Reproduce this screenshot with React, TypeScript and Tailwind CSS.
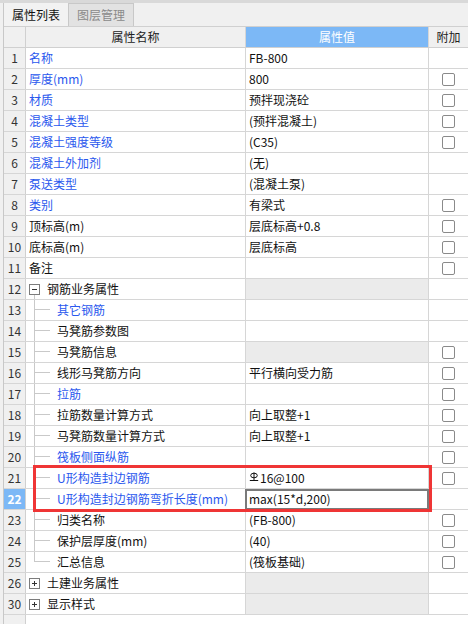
import React from 'react'

type Row = {
  n: number
  name: string
  blue?: boolean
  value?: React.ReactNode
  cb?: boolean
  gray?: boolean
  kind?: 'plain' | 'child' | 'open' | 'closed'
  last?: boolean
  selected?: boolean
  editing?: boolean
}

function Rebar() {
  return (
    <svg width="10" height="10" viewBox="0 0 10 10" className="mr-[1px] -mt-[3px] inline-block" fill="none" stroke="#111" strokeWidth="1">
      <ellipse cx="5" cy="3.5" rx="3.3" ry="2.3" />
      <line x1="5" y1="0.5" x2="5" y2="8.5" />
      <line x1="0.8" y1="8.5" x2="9.2" y2="8.5" />
    </svg>
  )
}

const ROWS: Row[] = [
  { n: 1, name: '名称', blue: true, value: 'FB-800' },
  { n: 2, name: '厚度(mm)', blue: true, value: '800', cb: true },
  { n: 3, name: '材质', blue: true, value: '预拌现浇砼', cb: true },
  { n: 4, name: '混凝土类型', blue: true, value: '(预拌混凝土)', cb: true },
  { n: 5, name: '混凝土强度等级', blue: true, value: '(C35)', cb: true },
  { n: 6, name: '混凝土外加剂', blue: true, value: '(无)' },
  { n: 7, name: '泵送类型', blue: true, value: '(混凝土泵)' },
  { n: 8, name: '类别', blue: true, value: '有梁式', cb: true },
  { n: 9, name: '顶标高(m)', value: '层底标高+0.8', cb: true },
  { n: 10, name: '底标高(m)', value: '层底标高', cb: true },
  { n: 11, name: '备注', cb: true },
  { n: 12, name: '钢筋业务属性', kind: 'open', gray: true },
  { n: 13, name: '其它钢筋', blue: true, kind: 'child' },
  { n: 14, name: '马凳筋参数图', kind: 'child' },
  { n: 15, name: '马凳筋信息', kind: 'child', gray: true, cb: true },
  { n: 16, name: '线形马凳筋方向', kind: 'child', value: '平行横向受力筋', cb: true },
  { n: 17, name: '拉筋', blue: true, kind: 'child', cb: true },
  { n: 18, name: '拉筋数量计算方式', kind: 'child', value: '向上取整+1', cb: true },
  { n: 19, name: '马凳筋数量计算方式', kind: 'child', value: '向上取整+1', cb: true },
  { n: 20, name: '筏板侧面纵筋', blue: true, kind: 'child', cb: true },
  {
    n: 21,
    name: 'U形构造封边钢筋',
    blue: true,
    kind: 'child',
    value: (
      <>
        <Rebar />
        16@100
      </>
    ),
    cb: true,
  },
  { n: 22, name: 'U形构造封边钢筋弯折长度(mm)', blue: true, kind: 'child', value: 'max(15*d,200)', selected: true, editing: true },
  { n: 23, name: '归类名称', kind: 'child', value: '(FB-800)', cb: true },
  { n: 24, name: '保护层厚度(mm)', kind: 'child', value: '(40)', cb: true },
  { n: 25, name: '汇总信息', kind: 'child', value: '(筏板基础)', cb: true, last: true },
  { n: 26, name: '土建业务属性', kind: 'closed', gray: true },
  { n: 30, name: '显示样式', kind: 'closed', gray: true },
]

function ExpandBox({ open }: { open: boolean }) {
  return (
    <div className="relative h-[11px] w-[11px] border border-[#7c7c7c] bg-white">
      <div className="absolute left-[2px] top-[4px] h-px w-[5px] bg-[#333]" />
      {!open && <div className="absolute left-[4px] top-[2px] h-[5px] w-px bg-[#333]" />}
    </div>
  )
}

function NameCell({ row }: { row: Row }) {
  const color = row.blue ? 'text-[#2a58ee]' : 'text-[#111]'
  if (row.kind === 'open' || row.kind === 'closed') {
    const open = row.kind === 'open'
    return (
      <div className="flex h-full items-stretch pl-[3px]">
        <div className="flex w-[11px] flex-col items-center">
          <div className="flex-1" />
          <ExpandBox open={open} />
          <div className={`flex-1 w-px ${open ? 'bg-[#c9c9c9]' : ''}`} />
        </div>
        <span className={`ml-[7px] self-center ${color}`}>{row.name}</span>
      </div>
    )
  }
  if (row.kind === 'child') {
    return (
      <div className="flex h-full items-stretch pl-[8px]">
        <div className="flex w-[16px] flex-col">
          <div className="h-1/2 border-b border-l border-[#c9c9c9]" />
          <div className={`flex-1 ${row.last ? '' : 'border-l border-[#c9c9c9]'}`} />
        </div>
        <span className={`ml-[7px] self-center whitespace-nowrap ${color}`}>{row.name}</span>
      </div>
    )
  }
  return (
    <div className="flex h-full items-center pl-[3px]">
      <span className={color}>{row.name}</span>
    </div>
  )
}

function Checkbox() {
  return <div className="h-[13px] w-[13px] rounded-[2px] border border-[#8a8a8a] bg-white" />
}

function TableRow({ row }: { row: Row }) {
  return (
    <div className="flex h-[21px] border-b border-[#d6d6d6]">
      <div
        className={`flex w-[22px] shrink-0 items-center justify-center border-r border-[#d0d0d0] ${
          row.selected ? 'bg-[#7cb8f6] font-bold text-white' : 'bg-[#f0f0f0] text-[#333]'
        }`}
      >
        {row.n}
      </div>
      <div className="w-[220px] shrink-0 border-r border-[#d6d6d6] bg-white">
        <NameCell row={row} />
      </div>
      <div
        className={`relative flex w-[183px] shrink-0 items-center border-r border-[#d6d6d6] pl-[3px] text-[#111] ${
          row.gray ? 'bg-[#ebebeb]' : 'bg-white'
        }`}
      >
        {row.value}
        {row.editing && <div className="absolute -left-px top-0 -right-px -bottom-px border-2 border-[#7a7a7a]" />}
      </div>
      <div className="flex flex-1 items-center justify-center bg-white">{row.cb && <Checkbox />}</div>
    </div>
  )
}

export default function App() {
  return (
    <div className="relative flex h-[624px] w-[468px] flex-col overflow-hidden bg-[#f0f0f0] font-['Noto_Sans_CJK_SC','Liberation_Sans',sans-serif] text-[12px] leading-[20px]">
      {/* window strip */}
      <div className="h-[3px] shrink-0 bg-[#d9d9d9]" />

      {/* tabs */}
      <div className="flex h-[23px] shrink-0 pl-[3px]">
        <div className="flex w-[65px] items-center justify-center border-l border-[#c8c8c8] bg-[#f2f2f2] text-[#111]">
          属性列表
        </div>
        <div className="flex w-[66px] items-center justify-center border-x border-t border-[#c8c8c8] bg-[#e2e2e2] text-[#8a8a8a]">
          图层管理
        </div>
      </div>

      {/* table */}
      <div className="ml-[3px] flex flex-1 flex-col border-l border-[#c8c8c8]">
        <div className="flex h-[22px] shrink-0 border-y border-[#d0d0d0]">
          <div className="w-[22px] shrink-0 border-r border-[#d0d0d0] bg-[#f0f0f0]" />
          <div className="flex w-[220px] shrink-0 items-center justify-center border-r border-[#d6d6d6] bg-[#f0f0f0] text-[#222]">
            属性名称
          </div>
          <div className="flex w-[183px] shrink-0 items-center justify-center border-r border-[#d6d6d6] bg-[#7cb8f6] text-white">
            属性值
          </div>
          <div className="flex flex-1 items-center justify-center bg-[#f0f0f0] text-[#222]">附加</div>
        </div>

        {ROWS.map((row) => (
          <TableRow key={row.n} row={row} />
        ))}

        <div className="flex flex-1">
          <div className="w-[22px] shrink-0 border-r border-[#d0d0d0] bg-[#f0f0f0]" />
          <div className="flex-1 bg-white" />
        </div>
      </div>

      {/* highlight */}
      <div className="absolute left-[33px] top-[465px] h-[47px] w-[399px] border-[3px] border-[#ef3535]" />
    </div>
  )
}
